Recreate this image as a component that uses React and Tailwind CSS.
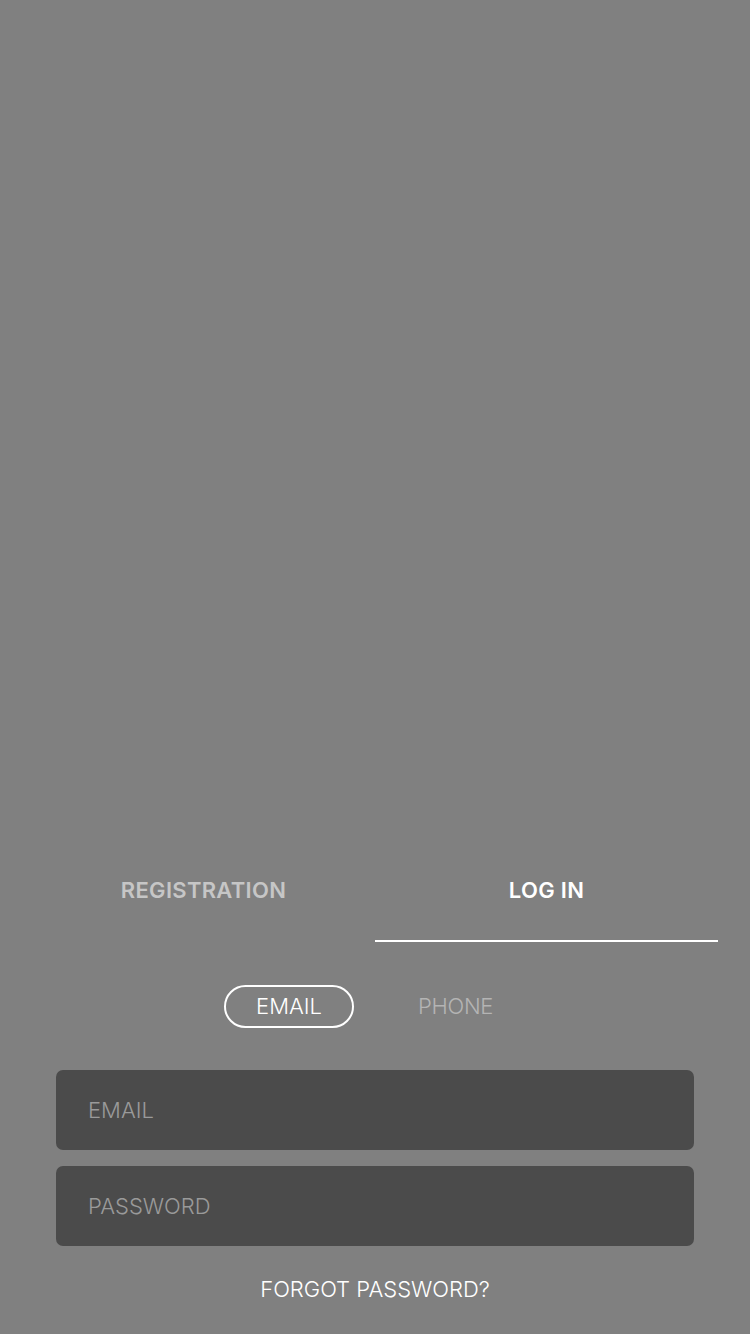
import React, { useState } from "react";

const App = () => {
    const [tab, setTab] = useState("login");
    const [mode, setMode] = useState("email");

    return (
        <div className="min-h-screen bg-[#808080] flex flex-col" style={{ fontFamily: "Inter, Roboto, sans-serif" }}>
            {/* empty top area */}
            <div className="h-[858px]" />

            {/* Tabs */}
            <div className="flex px-8">
                <button
                    onClick={() => setTab("register")}
                    className="flex-1 flex flex-col items-center"
                >
                    <span className={`pt-[20px] pb-[38px] text-[22px] leading-[24px] font-semibold tracking-[0.3px] ${tab === "register" ? "text-white" : "text-[#c6c6c6]"}`}>
                        REGISTRATION
                    </span>
                    <span className={`h-[2px] w-full ${tab === "register" ? "bg-white" : "bg-transparent"}`} />
                </button>
                <button
                    onClick={() => setTab("login")}
                    className="flex-1 flex flex-col items-center"
                >
                    <span className={`pt-[20px] pb-[38px] text-[22px] leading-[24px] font-semibold tracking-[0.3px] ${tab === "login" ? "text-white" : "text-[#c6c6c6]"}`}>
                        LOG IN
                    </span>
                    <span className={`h-[2px] w-full ${tab === "login" ? "bg-white" : "bg-transparent"}`} />
                </button>
            </div>

            {/* Email / phone switch */}
            <div className="mt-[43px] flex items-center pl-[224px] gap-[62px]">
                <button
                    onClick={() => setMode("email")}
                    className={`h-[43px] w-[130px] rounded-full border-2 text-[22px] font-light ${mode === "email" ? "border-white text-white" : "border-transparent text-[#b4b4b4]"}`}
                >
                    EMAIL
                </button>
                <button
                    onClick={() => setMode("phone")}
                    className={`h-[43px] rounded-full border-2 text-[22px] font-light tracking-[-0.3px] ${mode === "phone" ? "border-white text-white px-6" : "border-transparent text-[#b4b4b4]"}`}
                >
                    PHONE
                </button>
            </div>

            {/* Inputs */}
            <div className="mt-[42px] px-[56px] flex flex-col gap-4">
                <input
                    placeholder={mode === "email" ? "EMAIL" : "PHONE"}
                    className="h-[80px] w-full rounded-[7px] bg-[#4b4b4b] px-8 text-[22px] font-light text-white placeholder:text-[#9a9a9a] outline-none"
                />
                <input
                    type="password"
                    placeholder="PASSWORD"
                    className="h-[80px] w-full rounded-[7px] bg-[#4b4b4b] px-8 text-[22px] font-light text-white placeholder:text-[#9a9a9a] outline-none"
                />
            </div>

            <div className="mt-[31px] text-center text-[22px] leading-[24px] font-light text-white">
                FORGOT PASSWORD?
            </div>
        </div>
    );
};

export default App;
